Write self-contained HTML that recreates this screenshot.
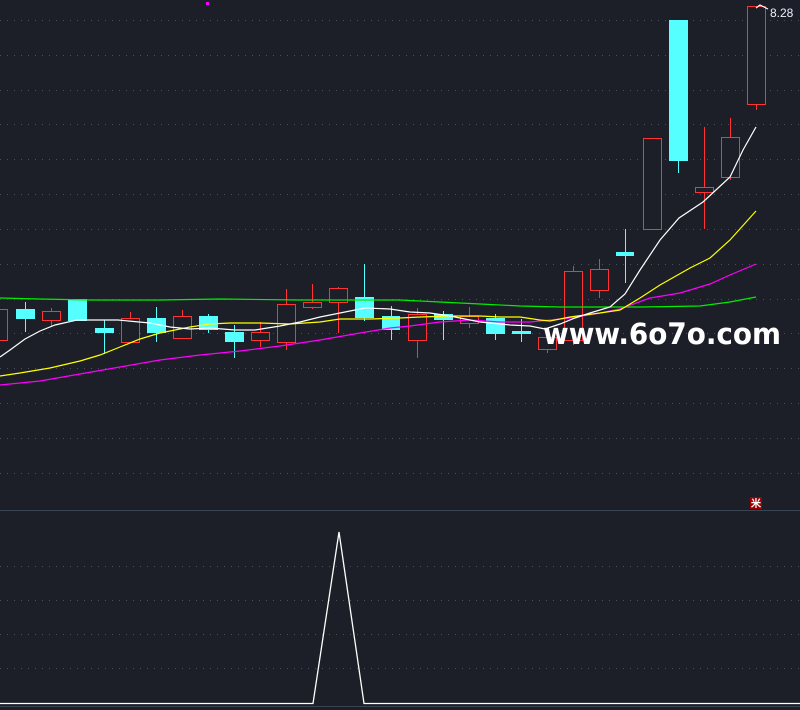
<!DOCTYPE html>
<html><head><meta charset="utf-8"><style>
html,body{margin:0;padding:0;background:#1c1f27;width:800px;height:710px;overflow:hidden}
svg{display:block}
</style></head><body>
<svg width="800" height="710" viewBox="0 0 800 710" xmlns="http://www.w3.org/2000/svg" shape-rendering="crispEdges">
<rect width="800" height="710" fill="#1c1f27"/>
<g stroke="#4a5060" stroke-width="1" stroke-dasharray="1,6">
<line x1="0" y1="20.5" x2="800" y2="20.5"/><line x1="0" y1="55.5" x2="800" y2="55.5"/><line x1="0" y1="90.5" x2="800" y2="90.5"/><line x1="0" y1="124.5" x2="800" y2="124.5"/><line x1="0" y1="159.5" x2="800" y2="159.5"/><line x1="0" y1="194.5" x2="800" y2="194.5"/><line x1="0" y1="229.5" x2="800" y2="229.5"/><line x1="0" y1="264.5" x2="800" y2="264.5"/><line x1="0" y1="299.5" x2="800" y2="299.5"/><line x1="0" y1="333.5" x2="800" y2="333.5"/><line x1="0" y1="368.5" x2="800" y2="368.5"/><line x1="0" y1="403.5" x2="800" y2="403.5"/><line x1="0" y1="438.5" x2="800" y2="438.5"/><line x1="0" y1="473.5" x2="800" y2="473.5"/>
<line x1="0" y1="566.5" x2="800" y2="566.5"/><line x1="0" y1="600.5" x2="800" y2="600.5"/><line x1="0" y1="634.5" x2="800" y2="634.5"/><line x1="0" y1="668.5" x2="800" y2="668.5"/>
</g>
<line x1="0" y1="510.5" x2="800" y2="510.5" stroke="#3a4452"/>
<line x1="0" y1="706.5" x2="800" y2="706.5" stroke="#3a4452"/>
<rect x="206" y="2" width="3" height="3" fill="#ff00ff"/>
<!-- wicks -->
<g stroke-width="1.3">
<g stroke="#55ffff">
<line x1="25.5" y1="302" x2="25.5" y2="332"/><line x1="104.5" y1="320" x2="104.5" y2="354"/><line x1="156.5" y1="307" x2="156.5" y2="342"/><line x1="208.5" y1="314" x2="208.5" y2="333"/><line x1="234.5" y1="325" x2="234.5" y2="358"/><line x1="364.5" y1="264" x2="364.5" y2="321"/><line x1="391.5" y1="306" x2="391.5" y2="340"/><line x1="443.5" y1="311" x2="443.5" y2="340"/><line x1="495.5" y1="314" x2="495.5" y2="340"/><line x1="521.5" y1="319" x2="521.5" y2="342"/><line x1="625.5" y1="229" x2="625.5" y2="283"/><line x1="678.5" y1="161" x2="678.5" y2="173"/>
</g>
<g stroke="#ff3333">
<line x1="51.5" y1="308" x2="51.5" y2="326"/><line x1="130.5" y1="312" x2="130.5" y2="342"/><line x1="182.5" y1="310" x2="182.5" y2="339"/><line x1="260.5" y1="322" x2="260.5" y2="347"/><line x1="286.5" y1="289" x2="286.5" y2="350"/><line x1="312.5" y1="284" x2="312.5" y2="309"/><line x1="338.5" y1="287" x2="338.5" y2="333"/><line x1="417.5" y1="308" x2="417.5" y2="358"/><line x1="469.5" y1="307" x2="469.5" y2="328"/><line x1="547.5" y1="349" x2="547.5" y2="353"/><line x1="573.5" y1="266" x2="573.5" y2="345"/><line x1="599.5" y1="259" x2="599.5" y2="298"/><line x1="704.5" y1="127" x2="704.5" y2="229"/><line x1="730.5" y1="118" x2="730.5" y2="180"/><line x1="756.5" y1="104" x2="756.5" y2="110"/>
</g>
</g>
<!-- cyan bodies -->
<g fill="#55ffff">
<rect x="16" y="309" width="19" height="10"/><rect x="68" y="299" width="19" height="22"/><rect x="95" y="328" width="19" height="5"/><rect x="147" y="318" width="19" height="15"/><rect x="199" y="316" width="19" height="14"/><rect x="225" y="332" width="19" height="10"/><rect x="355" y="297" width="19" height="21"/><rect x="382" y="316" width="18" height="14"/><rect x="434" y="314" width="19" height="6"/><rect x="486" y="318" width="19" height="16"/><rect x="512" y="331" width="19" height="3"/><rect x="616" y="252" width="18" height="4"/><rect x="669" y="20" width="19" height="141"/>
</g>
<!-- red bodies -->
<g fill="#1c1f27" stroke="#ff3333" stroke-width="1.3">
<rect x="-3.5" y="309.5" width="11" height="31"/><rect x="42.5" y="311.5" width="18" height="9"/><rect x="121.5" y="318.5" width="18" height="24"/><rect x="173.5" y="316.5" width="18" height="22"/><rect x="251.5" y="332.5" width="18" height="8"/><rect x="277.5" y="304.5" width="18" height="38"/><rect x="303.5" y="302.5" width="18" height="5"/><rect x="329.5" y="288.5" width="18" height="14"/><rect x="408.5" y="314.5" width="18" height="26"/><rect x="460.5" y="316.5" width="18" height="7"/><rect x="538.5" y="337.5" width="18" height="12"/><rect x="564.5" y="271.5" width="18" height="69"/><rect x="590.5" y="269.5" width="18" height="21"/><rect x="643.5" y="138.5" width="18" height="91"/><rect x="695.5" y="187.5" width="18" height="5"/><rect x="721.5" y="137.5" width="18" height="40"/><rect x="747.5" y="6.5" width="18" height="98"/>
</g>
<!-- MAs -->
<g fill="none" stroke-width="1.2" shape-rendering="auto">
<polyline stroke="#00ee00" points="0,298 40,299 90,300 160,300 220,299 300,300 400,300 440,302 480,304 520,306 560,307 600,307 640,307 700,306 730,302 756,297"/>
<polyline stroke="#ff00ff" points="0,385 40,381 80,374 120,367 160,360 200,355 240,351 280,346 320,340 360,333 390,328 410,326 440,322 470,320 500,322 530,322 550,320 570,318 600,313 620,309 650,298 680,293 710,284 730,275 756,264"/>
<polyline stroke="#ffff00" points="0,376 20,373 50,368 80,361 100,355 120,347 140,339 160,333 190,327 210,324 230,323 260,323 290,324 320,322 340,319 370,319 400,318 420,317 450,316 480,316 500,317 520,317 540,320 550,321 570,317 600,313 620,310 640,298 660,285 690,268 710,258 730,240 756,211"/>
<polyline stroke="#ffffff" points="0,357 10,350 25,339 40,331 55,325 77,320 100,320 118,320 150,323 170,327 190,329 210,328 235,330 255,330 280,326 300,322 320,317 340,313 365,308 390,309 410,312 430,313 450,316 480,322 510,325 530,326 545,329 560,324 575,318 590,313 610,307 625,294 640,270 660,240 679,218 703,202 730,177 743,150 756,127"/>
<polyline stroke="#ffffff" points="756,8 760,5 768,9"/>
</g>
<text x="770" y="17" fill="#e8f0ff" font-family="Liberation Sans, sans-serif" font-size="12">8.28</text>
<text x="543" y="344" fill="#ffffff" font-family="DejaVu Sans, Liberation Sans, sans-serif" font-weight="bold" font-size="29" textLength="238" lengthAdjust="spacingAndGlyphs">www.6o7o.com</text>
<rect x="750" y="497" width="12" height="12" fill="#990000"/>
<text x="751" y="507" fill="#fff" font-family="Liberation Sans, sans-serif" font-size="10" font-weight="bold">米</text>
<polyline fill="none" stroke="#ffffff" stroke-width="1.3" shape-rendering="auto" points="0,703.5 313,703.5 339,532 364,703.5 800,703.5"/>
</svg>
</body></html>
